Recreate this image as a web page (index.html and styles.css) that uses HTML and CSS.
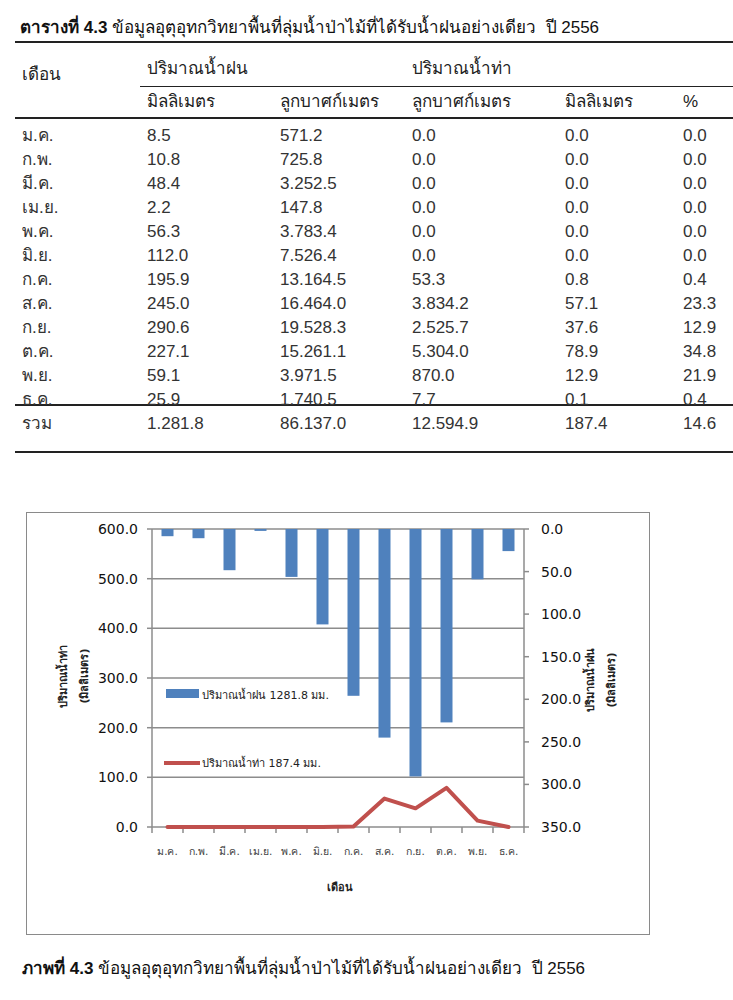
FILE: index.html
```html
<!DOCTYPE html>
<html lang="th">
<head>
<meta charset="utf-8">
<title>ตารางที่ 4.3</title>
<link rel="stylesheet" href="styles.css">
</head>
<body>
<div class="page">
  <div class="title"><b>ตารางที่ 4.3</b> ข้อมูลอุตุอุทกวิทยาพื้นที่ลุ่มน้ำป่าไม้ที่ได้รับน้ำฝนอย่างเดียว&nbsp; ปี 2556</div>
  <div class="table">
    <div class="head1">
      <div class="month-h">เดือน</div>
      <div class="group g1">ปริมาณน้ำฝน</div>
      <div class="group g2">ปริมาณน้ำท่า</div>
    </div>
    <div class="head2">
      <div></div>
      <div>มิลลิเมตร</div>
      <div>ลูกบาศก์เมตร</div>
      <div>ลูกบาศก์เมตร</div>
      <div>มิลลิเมตร</div>
      <div>%</div>
    </div>
    <div class="body">
      <div class="row"><div>ม.ค.</div><div>8.5</div><div>571.2</div><div>0.0</div><div>0.0</div><div>0.0</div></div>
      <div class="row"><div>ก.พ.</div><div>10.8</div><div>725.8</div><div>0.0</div><div>0.0</div><div>0.0</div></div>
      <div class="row"><div>มี.ค.</div><div>48.4</div><div>3.252.5</div><div>0.0</div><div>0.0</div><div>0.0</div></div>
      <div class="row"><div>เม.ย.</div><div>2.2</div><div>147.8</div><div>0.0</div><div>0.0</div><div>0.0</div></div>
      <div class="row"><div>พ.ค.</div><div>56.3</div><div>3.783.4</div><div>0.0</div><div>0.0</div><div>0.0</div></div>
      <div class="row"><div>มิ.ย.</div><div>112.0</div><div>7.526.4</div><div>0.0</div><div>0.0</div><div>0.0</div></div>
      <div class="row"><div>ก.ค.</div><div>195.9</div><div>13.164.5</div><div>53.3</div><div>0.8</div><div>0.4</div></div>
      <div class="row"><div>ส.ค.</div><div>245.0</div><div>16.464.0</div><div>3.834.2</div><div>57.1</div><div>23.3</div></div>
      <div class="row"><div>ก.ย.</div><div>290.6</div><div>19.528.3</div><div>2.525.7</div><div>37.6</div><div>12.9</div></div>
      <div class="row"><div>ต.ค.</div><div>227.1</div><div>15.261.1</div><div>5.304.0</div><div>78.9</div><div>34.8</div></div>
      <div class="row"><div>พ.ย.</div><div>59.1</div><div>3.971.5</div><div>870.0</div><div>12.9</div><div>21.9</div></div>
      <div class="row last"><div>ธ.ค.</div><div>25.9</div><div>1.740.5</div><div>7.7</div><div>0.1</div><div>0.4</div></div>
    </div>
    <div class="row total"><div>รวม</div><div>1.281.8</div><div>86.137.0</div><div>12.594.9</div><div>187.4</div><div>14.6</div></div>
  </div>

  <div class="chart">
    <svg class="chart-svg" width="624" height="423" viewBox="0 0 624 423" xmlns="http://www.w3.org/2000/svg">
      <g class="grid">
        <line x1="126" y1="17" x2="498" y2="17"/>
        <line x1="126" y1="66.7" x2="498" y2="66.7"/>
        <line x1="126" y1="116.3" x2="498" y2="116.3"/>
        <line x1="126" y1="166" x2="498" y2="166"/>
        <line x1="126" y1="215.7" x2="498" y2="215.7"/>
        <line x1="126" y1="265.3" x2="498" y2="265.3"/>
      </g>
      <g class="axis">
        <line x1="126" y1="17" x2="126" y2="315"/>
        <line x1="498" y1="17" x2="498" y2="315"/>
        <line x1="121" y1="315" x2="503" y2="315"/>
        <line x1="121" y1="17" x2="126" y2="17"/>
        <line x1="121" y1="66.7" x2="126" y2="66.7"/>
        <line x1="121" y1="116.3" x2="126" y2="116.3"/>
        <line x1="121" y1="166" x2="126" y2="166"/>
        <line x1="121" y1="215.7" x2="126" y2="215.7"/>
        <line x1="121" y1="265.3" x2="126" y2="265.3"/>
        <line x1="498" y1="17" x2="503" y2="17"/>
        <line x1="498" y1="59.6" x2="503" y2="59.6"/>
        <line x1="498" y1="102.1" x2="503" y2="102.1"/>
        <line x1="498" y1="144.7" x2="503" y2="144.7"/>
        <line x1="498" y1="187.3" x2="503" y2="187.3"/>
        <line x1="498" y1="229.9" x2="503" y2="229.9"/>
        <line x1="498" y1="272.4" x2="503" y2="272.4"/>
        <line x1="126" y1="315" x2="126" y2="321"/>
        <line x1="157" y1="315" x2="157" y2="321"/>
        <line x1="188" y1="315" x2="188" y2="321"/>
        <line x1="219" y1="315" x2="219" y2="321"/>
        <line x1="250" y1="315" x2="250" y2="321"/>
        <line x1="281" y1="315" x2="281" y2="321"/>
        <line x1="312" y1="315" x2="312" y2="321"/>
        <line x1="343" y1="315" x2="343" y2="321"/>
        <line x1="374" y1="315" x2="374" y2="321"/>
        <line x1="405" y1="315" x2="405" y2="321"/>
        <line x1="436" y1="315" x2="436" y2="321"/>
        <line x1="467" y1="315" x2="467" y2="321"/>
        <line x1="498" y1="315" x2="498" y2="321"/>
      </g>
      <g class="bars">
        <rect x="135.5" y="17" width="12" height="7.2"/>
        <rect x="166.5" y="17" width="12" height="9.2"/>
        <rect x="197.5" y="17" width="12" height="41.2"/>
        <rect x="228.5" y="17" width="12" height="1.9"/>
        <rect x="259.5" y="17" width="12" height="47.9"/>
        <rect x="290.5" y="17" width="12" height="95.4"/>
        <rect x="321.5" y="17" width="12" height="166.8"/>
        <rect x="352.5" y="17" width="12" height="208.6"/>
        <rect x="383.5" y="17" width="12" height="247.4"/>
        <rect x="414.5" y="17" width="12" height="193.4"/>
        <rect x="445.5" y="17" width="12" height="50.3"/>
        <rect x="476.5" y="17" width="12" height="22.1"/>
      </g>
      <polyline class="runoff" points="141.5,315 172.5,315 203.5,315 234.5,315 265.5,315 296.5,315 327.5,314.6 358.5,286.6 389.5,296.3 420.5,275.8 451.5,308.6 482.5,315"/>
      <g class="ylab-left">
        <text x="112" y="22">600.0</text>
        <text x="112" y="71.7">500.0</text>
        <text x="112" y="121.3">400.0</text>
        <text x="112" y="171">300.0</text>
        <text x="112" y="220.7">200.0</text>
        <text x="112" y="270.3">100.0</text>
        <text x="112" y="320">0.0</text>
      </g>
      <g class="ylab-right">
        <text x="515" y="22">0.0</text>
        <text x="515" y="64.6">50.0</text>
        <text x="515" y="107.1">100.0</text>
        <text x="515" y="149.7">150.0</text>
        <text x="515" y="192.3">200.0</text>
        <text x="515" y="234.9">250.0</text>
        <text x="515" y="277.4">300.0</text>
        <text x="515" y="320">350.0</text>
      </g>
      <g class="xlab">
        <text x="141.5" y="343">ม.ค.</text>
        <text x="172.5" y="343">ก.พ.</text>
        <text x="203.5" y="343">มี.ค.</text>
        <text x="234.5" y="343">เม.ย.</text>
        <text x="265.5" y="343">พ.ค.</text>
        <text x="296.5" y="343">มิ.ย.</text>
        <text x="327.5" y="343">ก.ค.</text>
        <text x="358.5" y="343">ส.ค.</text>
        <text x="389.5" y="343">ก.ย.</text>
        <text x="420.5" y="343">ต.ค.</text>
        <text x="451.5" y="343">พ.ย.</text>
        <text x="482.5" y="343">ธ.ค.</text>
      </g>
      <text class="xtitle" x="314" y="379">เดือน</text>
      <g class="ytitle" transform="translate(41 164) rotate(-90)">
        <text x="0" y="0">ปริมาณน้ำท่า</text>
        <text x="0" y="21">(มิลลิเมตร)</text>
      </g>
      <g class="ytitle" transform="translate(568 168) rotate(-90)">
        <text x="0" y="0">ปริมาณน้ำฝน</text>
        <text x="0" y="21">(มิลลิเมตร)</text>
      </g>
      <rect class="leg-bar" x="140" y="177" width="33" height="9"/>
      <text class="leg-text" x="176" y="187">ปริมาณน้ำฝน 1281.8 มม.</text>
      <line class="leg-line" x1="138" y1="251" x2="174" y2="251"/>
      <text class="leg-text" x="176" y="255">ปริมาณน้ำท่า 187.4 มม.</text>
    </svg>
  </div>

  <div class="caption"><b>ภาพที่ 4.3</b> ข้อมูลอุตุอุทกวิทยาพื้นที่ลุ่มน้ำป่าไม้ที่ได้รับน้ำฝนอย่างเดียว&nbsp; ปี 2556</div>
</div>
</body>
</html>
```

FILE: styles.css
```css
html, body {
  margin: 0;
  padding: 0;
  background: #ffffff;
}

.page {
  width: 733px;
  height: 1000px;
  overflow: hidden;
  font-family: "Liberation Sans", Arial, sans-serif;
  color: #222;
}

.title {
  font-size: 17px;
  line-height: 24px;
  padding: 16px 0 0 20px;
  height: 25px;
  color: #111;
}

.title b, .caption b {
  font-weight: bold;
}

.table {
  margin-left: 15px;
  width: 718px;
  border-top: 2px solid #222;
  font-size: 17px;
}

.head1 {
  display: grid;
  grid-template-columns: 125px 265px 328px;
  height: 43px;
}

.head1 .month-h {
  padding: 20px 0 0 7px;
  line-height: 24px;
}

.head1 .group {
  padding: 14px 0 0 7px;
  line-height: 24px;
  border-bottom: 1.5px solid #222;
}

.head2, .row {
  display: grid;
  grid-template-columns: 132px 133px 132px 153px 118px 50px;
  line-height: 24px;
}

.head2 {
  border-bottom: 2px solid #222;
  box-sizing: border-box;
  height: 33px;
  padding-top: 4px;
}

.head2 > div:first-child, .row > div:first-child {
  padding-left: 7px;
}

.body {
  padding-top: 5px;
}

.row {
  height: 24px;
  color: #333;
}

.row.last {
  height: 16px;
}

.row.total {
  border-top: 2px solid #222;
  border-bottom: 2px solid #222;
  height: 49px;
  box-sizing: border-box;
  padding-top: 6px;
}

.chart {
  margin: 59px 0 0 26px;
  width: 622px;
  height: 421px;
  border: 1.5px solid #8a8a8a;
}

.chart-svg {
  display: block;
  margin: -1.5px 0 0 -1.5px;
  font-family: "DejaVu Sans", "Noto Sans", sans-serif;
}

.grid line {
  stroke: #8c8c8c;
  stroke-width: 1.5;
}

.axis line {
  stroke: #8c8c8c;
  stroke-width: 1.5;
}

.bars rect {
  fill: #4f81bd;
}

.runoff {
  fill: none;
  stroke: #c0504d;
  stroke-width: 4;
  stroke-linejoin: round;
  stroke-linecap: round;
}

.ylab-left text {
  font-size: 14px;
  fill: #111;
  text-anchor: end;
}

.ylab-right text {
  font-size: 14px;
  fill: #111;
  text-anchor: start;
}

.xlab text {
  font-size: 10.5px;
  fill: #444;
  text-anchor: middle;
}

.xtitle {
  font-size: 11px;
  font-weight: bold;
  fill: #222;
  text-anchor: middle;
}

.ytitle text {
  font-size: 11px;
  font-weight: bold;
  fill: #222;
  text-anchor: middle;
}

.leg-bar {
  fill: #4f81bd;
}

.leg-line {
  stroke: #c0504d;
  stroke-width: 4;
}

.leg-text {
  font-size: 11px;
  fill: #222;
}

.caption {
  margin-top: 22px;
  padding-left: 22px;
  font-size: 17px;
  line-height: 24px;
  color: #111;
}
```
